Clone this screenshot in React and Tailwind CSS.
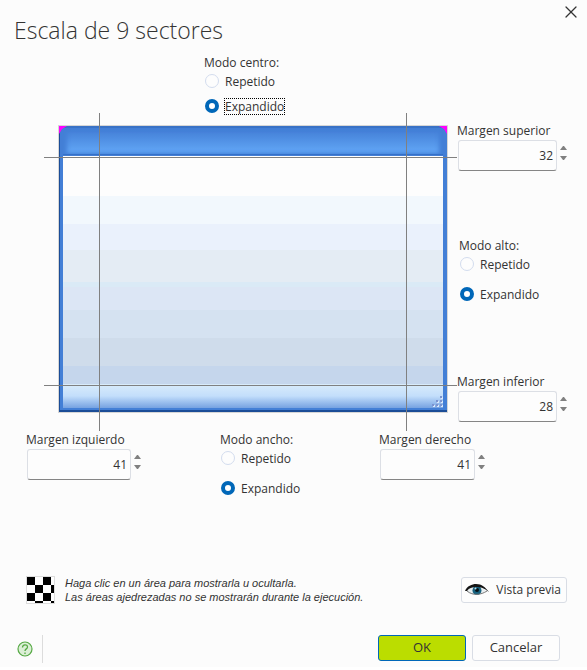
import { useState } from "react";
import { X } from "lucide-react";

const bodyBands = [
  { color: "#fdfdfd", size: 39 },
  { color: "#f2f8fd", size: 28 },
  { color: "#eaf1fc", size: 26 },
  { color: "#e4ecf4", size: 33 },
  { color: "#daeaf6", size: 5 },
  { color: "#dce6f5", size: 23 },
  { color: "#d5e2f1", size: 28 },
  { color: "#cfdceb", size: 28 },
  { color: "#c5d6ec", size: 18 },
];

function Radio({ name, label, checked, onChange, focused }) {
  return (
    <label className="flex h-[18px] items-center gap-[5px] pl-px">
      <input
        type="radio"
        name={name}
        checked={checked}
        onChange={onChange}
        className="h-[14px] w-[14px] shrink-0 appearance-none rounded-full border border-[#d3dcee] bg-[#fdfdfd] checked:border-4 checked:border-[#0067b8] checked:bg-white"
      />
      <span
        className={`border leading-[15px] ${
          focused ? "border-dotted border-black" : "border-transparent"
        }`}
      >
        {label}
      </span>
    </label>
  );
}

function ModeGroup({ title, name, focused, spacing }) {
  const [mode, setMode] = useState("expandido");

  return (
    <fieldset>
      <legend className="h-[18px] leading-[18px]">{title}</legend>
      <div className={`flex flex-col ${spacing}`}>
        <Radio
          name={name}
          label="Repetido"
          checked={mode === "repetido"}
          onChange={() => setMode("repetido")}
        />
        <Radio
          name={name}
          label="Expandido"
          checked={mode === "expandido"}
          onChange={() => setMode("expandido")}
          focused={focused}
        />
      </div>
    </fieldset>
  );
}

function MarginField({ id, label, initial, width }) {
  const [value, setValue] = useState(initial);

  return (
    <div>
      <label htmlFor={id} className="block leading-[18px]">
        {label}
      </label>
      <div className="ml-px flex items-start gap-[3px]">
        <input
          id={id}
          type="text"
          value={value}
          onChange={(e) => setValue(e.target.value)}
          className={`h-[31px] rounded-[3px] border border-[#dcdfe5] border-b-[#858585] bg-[#fdfdfd] pr-[3px] text-right ${width}`}
        />
        <div className="flex flex-col pt-[3px]">
          <button
            type="button"
            aria-label={`Aumentar ${label}`}
            onClick={() => setValue(Number(value) + 1)}
            className="flex h-[10px] w-[7px] items-center"
          >
            <svg viewBox="0 0 7 4" className="h-1 w-[7px]">
              <path d="M0 4L3 0H4L7 4Z" fill="#808080" />
            </svg>
          </button>
          <button
            type="button"
            aria-label={`Reducir ${label}`}
            onClick={() => setValue(Number(value) - 1)}
            className="flex h-[10px] w-[7px] items-center"
          >
            <svg viewBox="0 0 7 4" className="h-1 w-[7px]">
              <path d="M0 0H7L4 4H3Z" fill="#808080" />
            </svg>
          </button>
        </div>
      </div>
    </div>
  );
}

function ScalePreview() {
  return (
    <div className="relative mt-[10px] h-[288px] min-w-0 flex-1 border border-[#d6d6d6]">
      <div className="flex h-full flex-col border-x-4 border-b-4 border-[#437fd6] bg-[#437fd6]">
        <div className="h-[29px] border-t-2 border-b border-t-[#3972c6] border-b-[#3570c8] bg-linear-to-b from-[#417cd4] to-[#64a9f8] shadow-[inset_4px_0_4px_#437fd6,inset_-4px_0_4px_#437fd6]" />
        <div className="mt-px flex min-h-0 flex-1 flex-col border-t border-white">
          {bodyBands.map(({ color, size }) => (
            <div key={color} style={{ backgroundColor: color, flex: `${size} 1 0` }} />
          ))}
        </div>
        <div className="h-[24px] bg-linear-to-b from-[#d9ecfb] via-[#c3defb] to-[#76a2e1]" />
      </div>

      {/* window edges */}
      <div className="absolute inset-y-0 left-0 w-px bg-[#1b4d97]" />
      <div className="absolute inset-x-0 bottom-0 h-[2px] bg-[#1b4d97]" />
      <svg viewBox="0 0 8 8" className="absolute top-0 left-0 h-2 w-2">
        <path d="M0 0H8L3 3L0 8Z" fill="#f0f" />
      </svg>
      <svg viewBox="0 0 8 8" className="absolute top-0 right-0 h-2 w-2">
        <path d="M8 0H0L5 3L8 8Z" fill="#f0f" />
      </svg>
      <svg viewBox="0 0 12 12" className="absolute right-1 bottom-1 h-3 w-3">
        <path
          d="M10 1h2v2h-2zM6 5h2v2H6zM10 5h2v2h-2zM2 9h2v2H2zM6 9h2v2H6zM10 9h2v2h-2z"
          fill="#dbe8fb"
        />
        <path
          d="M9 0h2v2H9zM5 4h2v2H5zM9 4h2v2H9zM1 8h2v2H1zM5 8h2v2H5zM9 8h2v2H9z"
          fill="#7b93cf"
        />
      </svg>

      {/* sector guides */}
      <div className="absolute top-[31px] -right-[10px] -left-[15px] h-px bg-[#808080]" />
      <div className="absolute bottom-[26px] -right-[10px] -left-[15px] h-px bg-[#808080]" />
      <div className="absolute -top-[13px] -bottom-[19px] left-[40px] w-px bg-[#808080]" />
      <div className="absolute -top-[13px] -bottom-[19px] right-[40px] w-px bg-[#808080]" />
    </div>
  );
}

function Checkerboard() {
  return (
    <svg viewBox="0 0 29 28" className="h-[28px] w-[29px]" shapeRendering="crispEdges">
      <rect width="29" height="28" fill="#dcdcdc" />
      <rect x="1" y="1" width="27" height="26" fill="#fff" />
      <path d="M1 1h8v8H1zM17 1h8v8h-8zM9 9h8v8H9zM25 9h3v8h-3zM1 17h8v8H1zM17 17h8v8h-8zM9 25h8v2H9zM25 25h3v2h-3z" />
    </svg>
  );
}

function EyeIcon() {
  return (
    <svg viewBox="0 0 24 14" className="h-[14px] w-6">
      <path d="M1 8C5 3 14 1 21 8C16 12 7 13 3 9Z" fill="#e8eef0" />
      <circle cx="12" cy="7.500" r="4.500" fill="#16617f" />
      <circle cx="12" cy="7" r="2" fill="#051015" />
      <circle cx="10.500" cy="5.500" r="1" fill="#bfe4f0" />
      <path d="M0 8C2 3 7 1 11 1C17 1 20 4 24 9C19 5 16 4 11 4C7 4 4 5 2 8Z" fill="#151515" />
      <path d="M2 8C8 13 16 12 22 8" fill="none" stroke="#777" strokeWidth="1" />
    </svg>
  );
}

export default function App() {
  return (
    <main className="bg-[#fcfcfc] pb-1 font-['Open_Sans','Noto_Sans',sans-serif] text-xs text-[#333]">
      <header className="flex h-[54px] items-start justify-between pr-[6px] pl-[14px]">
        <h1 className="pt-3 text-[23px] leading-[36px] font-light">Escala de 9 sectores</h1>
        <button type="button" aria-label="Cerrar" className="pt-[2px]">
          <X size={20} strokeWidth={1.5} />
        </button>
      </header>

      <section className="flex flex-col">
        <div className="pl-[204px]">
          <ModeGroup title="Modo centro:" name="centro" spacing="gap-[7px]" focused />
        </div>

        <div className="flex items-start pl-[58px]">
          <ScalePreview />
          <div className="mt-[7px] ml-[9px] flex w-[130px] shrink-0 flex-col gap-[66px]">
            <MarginField id="superior" label="Margen superior" initial={32} width="w-[99px]" />
            <div className="pb-1 pl-[2px]">
              <ModeGroup title="Modo alto:" name="alto" spacing="gap-3" />
            </div>
            <MarginField id="inferior" label="Margen inferior" initial={28} width="w-[99px]" />
          </div>
        </div>

        <div className="mt-[9px] grid grid-cols-[194px_159px_1fr] pl-[26px]">
          <MarginField id="izquierdo" label="Margen izquierdo" initial={41} width="w-[104px]" />
          <ModeGroup title="Modo ancho:" name="ancho" spacing="gap-3" />
          <MarginField id="derecho" label="Margen derecho" initial={41} width="w-[95px]" />
        </div>
      </section>

      <section className="mt-[79px] flex items-center pr-[20px] pl-[26px]">
        <Checkerboard />
        <p className="ml-[10px] flex-1 font-['Liberation_Sans',Arial,sans-serif] text-[11px] leading-[14px] italic">
          Haga clic en un área para mostrarla u ocultarla.
          <br />
          Las áreas ajedrezadas no se mostrarán durante la ejecución.
        </p>
        <button
          type="button"
          className="flex h-[26px] w-[106px] items-center justify-between rounded-[3px] border border-[#d9dde5] bg-[#fdfdfd] pr-[5px] pl-[3px]"
        >
          <EyeIcon />
          Vista previa
        </button>
      </section>

      <footer className="mt-[31px] flex h-7 items-start pr-[27px] pl-[17px]">
        <button type="button" aria-label="Ayuda" className="mt-[6px]">
          <svg viewBox="0 0 16 16" className="h-4 w-4" fill="none" stroke="#55a944">
            <circle cx="8" cy="8" r="7" fill="#dcefd6" strokeWidth="1.200" />
            <path d="M5.500 6.500C5.500 3 10.500 3 10.500 6C10.500 8 8 7.800 8 10M8 11.500V13" strokeWidth="1.300" />
          </svg>
        </button>
        <div className="mr-auto ml-[9px] h-full w-px bg-[#dcdcdc]" />
        <div className="flex gap-[6px] text-[13px]">
          <button type="submit" className="h-[26px] w-[88px] rounded-[3px] border border-[#0067b8] bg-[#bbdd00]">
            OK
          </button>
          <button type="button" className="h-[26px] w-[88px] rounded-[3px] border border-[#d9dde5] bg-[#fdfdfd]">
            Cancelar
          </button>
        </div>
      </footer>
    </main>
  );
}
